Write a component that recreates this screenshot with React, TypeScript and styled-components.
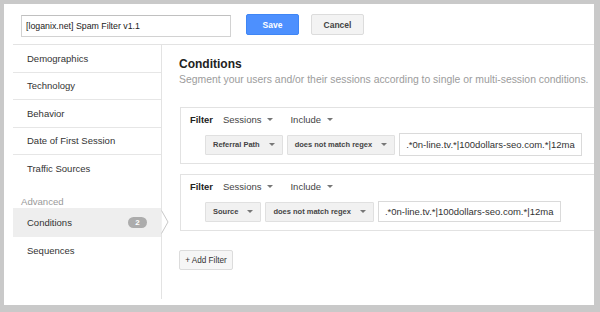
import React from 'react';
import styled, { createGlobalStyle } from 'styled-components';

const GlobalStyle = createGlobalStyle`
  body {
    margin: 0;
    font-family: "Liberation Sans", Arial, sans-serif;
  }
  * {
    box-sizing: border-box;
  }
`;

const Frame = styled.div`
  width: 600px;
  height: 312px;
  border-style: solid;
  border-color: #c9c9c9;
  border-width: 4px 6px 7px 4px;
  background: #fff;
  display: flex;
  flex-direction: column;
  overflow: hidden;
  padding-left: 9px;
`;

const Header = styled.div`
  height: 41px;
  flex-shrink: 0;
  display: flex;
  align-items: flex-start;
  padding: 10px 0 0 8px;
  border-bottom: 1px solid #e3e3e3;
`;

const TitleInput = styled.input`
  width: 210px;
  height: 22px;
  margin-top: 1px;
  padding: 0 4px;
  border: 1px solid #d2d2d2;
  border-top-color: #c0c0c0;
  font-family: inherit;
  font-size: 8.8px;
  color: #222;
  outline: none;
`;

const Button = styled.button<{ $primary?: boolean }>`
  width: 53px;
  height: 21px;
  border-radius: 2px;
  font-family: inherit;
  font-size: 8.5px;
  font-weight: bold;
  padding: 0;
  margin-left: ${p => (p.$primary ? '15px' : '12px')};
  color: ${p => (p.$primary ? '#fff' : '#444')};
  background: ${p => (p.$primary ? '#4d90fe' : '#f3f3f3')};
  border: 1px solid ${p => (p.$primary ? '#3f86f5' : '#dcdcdc')};
`;

const Main = styled.div`
  flex: 1;
  display: flex;
  min-height: 0;
`;

const Sidebar = styled.div`
  width: 149px;
  flex-shrink: 0;
  border-right: 1px solid #e3e3e3;
  margin-bottom: 6px;
`;

const NavItem = styled.div<{ $last?: boolean; $active?: boolean }>`
  position: relative;
  height: ${p => (p.$active ? '29px' : '27.5px')};
  display: flex;
  align-items: center;
  justify-content: space-between;
  padding: 0 14px 0 14px;
  font-size: 9.5px;
  color: #333;
  background: ${p => (p.$active ? '#eeeeee' : 'transparent')};
  border-bottom: ${p => (p.$last ? 'none' : '1px solid #e6e6e6')};
`;

const GroupLabel = styled.div`
  margin-top: 13px;
  padding-left: 8px;
  height: 12px;
  line-height: 12px;
  font-size: 9.6px;
  color: #9a9a9a;
`;

const Badge = styled.span`
  width: 19px;
  height: 11px;
  border-radius: 6px;
  background: #acacac;
  color: #fff;
  font-size: 8px;
  font-weight: bold;
  display: flex;
  align-items: center;
  justify-content: center;
`;

const Pointer = styled.svg`
  position: absolute;
  left: 100%;
  top: 50%;
  transform: translateY(-50%);
`;

const Content = styled.div`
  flex: 1;
  padding: 12px 0 0 17px;
`;

const Heading = styled.div`
  font-size: 12px;
  line-height: 14px;
  font-weight: bold;
  color: #222;
`;

const Description = styled.div`
  margin-top: 2px;
  font-size: 10.4px;
  line-height: 13px;
  color: #9c9c9c;
  white-space: nowrap;
`;

const FilterBox = styled.div<{ $first?: boolean }>`
  margin-top: ${p => (p.$first ? '21px' : '10px')};
  margin-left: 1px;
  border: 1px solid #e2e2e2;
  border-right: none;
  padding: 0 0 7px 9px;
`;

const FilterHead = styled.div`
  height: 22px;
  display: flex;
  align-items: center;
`;

const FilterLabel = styled.span`
  font-size: 9.4px;
  font-weight: bold;
  color: #222;
  margin-right: 10px;
`;

const Trigger = styled.span`
  display: inline-flex;
  align-items: center;
  gap: 6px;
  font-size: 9.5px;
  color: #444;
  margin-right: 17px;
`;

const Caret = styled.i`
  width: 0;
  height: 0;
  border-left: 3px solid transparent;
  border-right: 3px solid transparent;
  border-top: 3px solid #777;
`;

const RuleRow = styled.div`
  margin: 3px 0 0 15px;
  height: 23px;
  display: flex;
  align-items: center;
  gap: 4px;
`;

const Select = styled.div`
  height: 20px;
  display: flex;
  align-items: center;
  gap: 9px;
  padding: 0 7px 0 7px;
  background: #f1f1f1;
  border: 1px solid #e0e0e0;
  border-radius: 1px;
  font-size: 7.5px;
  font-weight: bold;
  color: #444;
  white-space: nowrap;
`;

const ValueInput = styled.input<{ $tall?: boolean }>`
  width: 183px;
  height: ${p => (p.$tall ? '23px' : '21px')};
  padding: 0 6px;
  border: 1px solid #dadada;
  font-family: inherit;
  font-size: 9.5px;
  color: #333;
  outline: none;
`;

const AddButton = styled.button`
  margin-top: 19px;
  height: 20px;
  width: 54px;
  padding: 0;
  border: 1px solid #dcdcdc;
  border-radius: 2px;
  background: #f6f6f6;
  font-family: inherit;
  font-size: 8.2px;
  color: #333;
`;

const navItems = ['Demographics', 'Technology', 'Behavior', 'Date of First Session', 'Traffic Sources'];

const regex = '.*0n-line.tv.*|100dollars-seo.com.*|12ma';

const filters = [
  { dimension: 'Referral Path', tall: true },
  { dimension: 'Source', tall: false },
];

export default function App() {
  return (
    <>
      <GlobalStyle />
      <Frame>
        <Header>
          <TitleInput defaultValue="[loganix.net] Spam Filter v1.1" />
          <Button $primary>Save</Button>
          <Button>Cancel</Button>
        </Header>
        <Main>
          <Sidebar>
            {navItems.map((item, i) => (
              <NavItem key={item} $last={i === navItems.length - 1}>
                {item}
              </NavItem>
            ))}
            <GroupLabel>Advanced</GroupLabel>
            <NavItem $active $last>
              Conditions
              <Badge>2</Badge>
              <Pointer width="8" height="24" viewBox="0 0 8 24">
                <polyline points="0.5,0.5 7,12 0.5,23.5" fill="#fff" stroke="#c8c8c8" strokeWidth="1" />
              </Pointer>
            </NavItem>
            <NavItem $last>Sequences</NavItem>
          </Sidebar>
          <Content>
            <Heading>Conditions</Heading>
            <Description>
              Segment your users and/or their sessions according to single or multi-session conditions.
            </Description>
            {filters.map((f, i) => (
              <FilterBox key={f.dimension} $first={i === 0}>
                <FilterHead>
                  <FilterLabel>Filter</FilterLabel>
                  <Trigger>
                    Sessions <Caret />
                  </Trigger>
                  <Trigger>
                    Include <Caret />
                  </Trigger>
                </FilterHead>
                <RuleRow>
                  <Select>
                    {f.dimension} <Caret />
                  </Select>
                  <Select>
                    does not match regex <Caret />
                  </Select>
                  <ValueInput $tall={f.tall} defaultValue={regex} />
                </RuleRow>
              </FilterBox>
            ))}
            <AddButton>+ Add Filter</AddButton>
          </Content>
        </Main>
      </Frame>
    </>
  );
}
